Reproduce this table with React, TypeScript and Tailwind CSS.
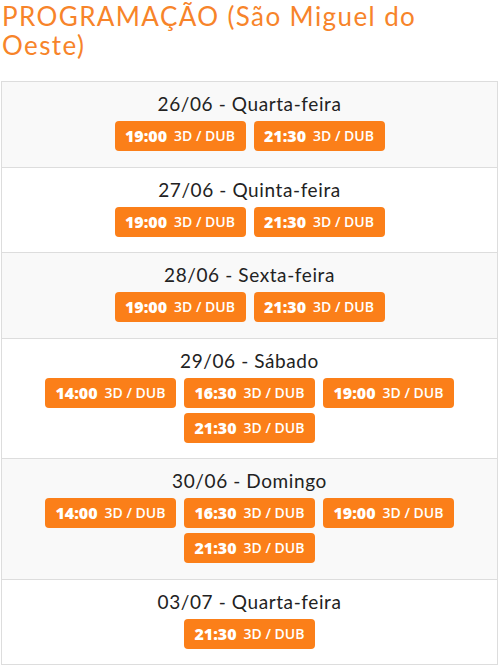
import React from "react";

type Day = { date: string; times: string[] };

const days: Day[] = [
  { date: "26/06 - Quarta-feira", times: ["19:00", "21:30"] },
  { date: "27/06 - Quinta-feira", times: ["19:00", "21:30"] },
  { date: "28/06 - Sexta-feira", times: ["19:00", "21:30"] },
  { date: "29/06 - Sábado", times: ["14:00", "16:30", "19:00", "21:30"] },
  { date: "30/06 - Domingo", times: ["14:00", "16:30", "19:00", "21:30"] },
  { date: "03/07 - Quarta-feira", times: ["21:30"] },
];

export default function App() {
  return (
    <div className="w-[501px] h-[667px] bg-white overflow-hidden pl-[1px]">
      <h1
        className="text-[#f7842a] text-[26px] leading-[29px] font-normal tracking-[1.4px] pt-[2px] pl-[1px] m-0"
        style={{ fontFamily: "Lato, 'Open Sans', sans-serif" }}
      >
        PROGRAMAÇÃO (São Miguel do
        <br />
        Oeste)
      </h1>
      <div className="mt-[21px] w-[497px] border border-[#dddddd]">
        {days.map((d, i) => (
          <div
            key={i}
            className={`${i > 0 ? "border-t border-[#dddddd]" : ""} ${
              i % 2 === 0 ? "bg-[#f9f9f9]" : "bg-white"
            } pt-[8px] pb-[10.5px] text-center`}
          >
            <div
              className="text-[19px] leading-[27px] tracking-[0.6px] text-[#222]"
              style={{ fontFamily: "Lato, 'Open Sans', sans-serif" }}
            >
              {d.date}
            </div>
            <div className="mt-[4px] flex flex-wrap justify-center gap-x-[8px] gap-y-[5px] px-[40px]">
              {d.times.map((t, j) => (
                <span
                  key={j}
                  className="w-[131px] h-[30px] rounded-[4px] bg-[#fb7f19] text-white flex items-center justify-center gap-[7px]"
                  style={{ fontFamily: "'Open Sans', sans-serif" }}
                >
                  <span className="text-[16px] font-extrabold leading-none">{t}</span>
                  <span className="text-[14px] font-semibold leading-none">3D / DUB</span>
                </span>
              ))}
            </div>
            <div className="h-[5px]" />
          </div>
        ))}
      </div>
    </div>
  );
}
